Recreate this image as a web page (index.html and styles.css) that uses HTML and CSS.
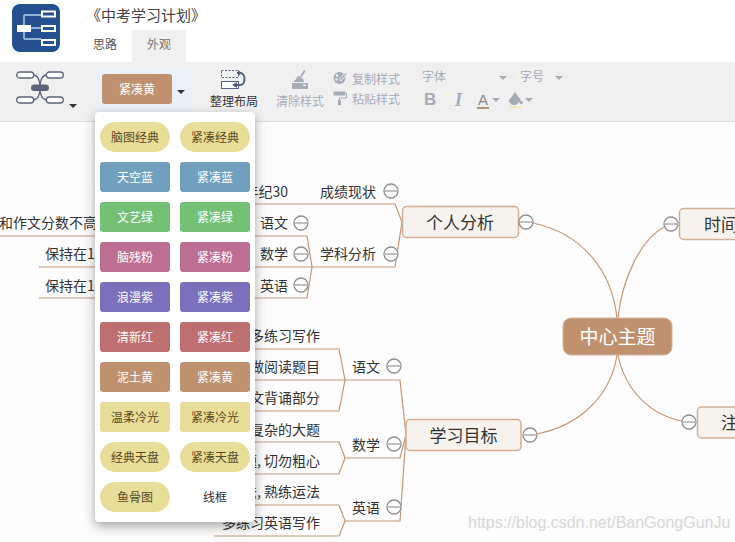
FILE: index.html
```html
<!DOCTYPE html>
<html lang="en">
<head>
  <meta charset="UTF-8">
  <title>中考学习计划</title>
  <link rel="stylesheet" href="styles.css">
</head>
<body>
  <div id="app">
    <div class="header">
      <svg class="logo" viewBox="0 0 48 48">
        <rect width="48" height="48" rx="8" fill="#24508f"/>
        <path d="M12 11V35M12 11H29M12 24H29M12 35H29" stroke="#8fb0d8" stroke-width="2" fill="none"/>
        <rect x="5" y="21" width="14" height="7" fill="#fff"/>
        <rect x="30" y="7.500" width="13" height="5" fill="#24508f" stroke="#fff" stroke-width="2"/>
        <rect x="30" y="22" width="13" height="5" fill="#24508f" stroke="#fff" stroke-width="2"/>
        <rect x="30" y="36" width="13" height="5" fill="#24508f" stroke="#fff" stroke-width="2"/>
      </svg>
      <div class="header-main">
        <div class="title">《中考学习计划》</div>
        <div class="tabs">
          <div class="tab">思路</div>
          <div class="tab tab-active">外观</div>
        </div>
      </div>
    </div>

    <div class="toolbar">
      <div class="struct">
        <svg class="struct-icon" width="48" height="33" viewBox="0 0 48 33">
          <g fill="#fff" stroke="#5c6379" stroke-width="1.300">
            <rect x="0.700" y="1" width="17" height="6" rx="3"/>
            <rect x="30.300" y="1" width="17" height="6" rx="3"/>
            <rect x="0.700" y="26" width="17" height="6" rx="3"/>
            <rect x="30.300" y="26" width="17" height="6" rx="3"/>
            <path d="M18 4C23 5 24 11 24 16.500C24 22 23 28 18 29M30 4C25 5 24 11 24 16.500C24 22 25 28 30 29" fill="none"/>
          </g>
          <rect x="15" y="13.500" width="18" height="6.500" rx="3.200" fill="#5c6379"/>
        </svg>
        <span class="caret caret-dark struct-caret"></span>
      </div>

      <div class="skin">
        <div class="skin-current">紧凑黄</div>
        <span class="caret caret-dark skin-caret"></span>
      </div>

      <div class="layout-tool">
        <svg width="26" height="19" viewBox="0 0 26 19">
          <rect x="0.500" y="0.500" width="17" height="7" fill="none" stroke="#556079" stroke-dasharray="2 1.500"/>
          <rect x="0.500" y="11.500" width="17" height="7" fill="#fff" stroke="#556079"/>
          <path d="M16 3H19C25 3 25 15 19 15H14" fill="none" stroke="#556079" stroke-width="2"/>
          <path d="M17 0L21 3L17 6ZM16 12L11 15L16 18Z" fill="#556079"/>
        </svg>
        <span>整理布局</span>
      </div>

      <div class="clear-tool">
        <svg width="18" height="19" viewBox="0 0 18 19">
          <path d="M13 0L14.500 1L10.500 7.500L9 6.500Z" fill="#a6abb8"/>
          <path d="M7 5.500L12 9C12.500 10 13 11 13 12H2C4 10.500 6 8 7 5.500Z" fill="#a6abb8"/>
          <path d="M1 13H17V19H1Z" fill="#a6abb8"/>
          <rect x="12" y="14.500" width="3" height="1.500" fill="#f0f0f0"/>
        </svg>
        <span>清除样式</span>
      </div>

      <div class="style-tools">
        <div class="style-row">
          <svg width="14" height="14" viewBox="0 0 14 14">
            <circle cx="6.500" cy="7" r="6" fill="#a6abb8"/>
            <circle cx="4" cy="4.500" r="1.200" fill="#f0f0f0"/>
            <circle cx="3.500" cy="8.500" r="1.200" fill="#f0f0f0"/>
            <path d="M13.500 1L6.500 8L8 10L14 3Z" fill="#a6abb8" stroke="#f0f0f0"/>
          </svg>
          <span>复制样式</span>
        </div>
        <div class="style-row">
          <svg width="14" height="14" viewBox="0 0 14 14">
            <rect x="0.500" y="0.500" width="12" height="4" fill="#a6abb8"/>
            <path d="M12.500 2.500H13.500V7H6.500V9" fill="none" stroke="#a6abb8"/>
            <rect x="5" y="9" width="3" height="5" fill="#a6abb8"/>
          </svg>
          <span>粘贴样式</span>
        </div>
      </div>

      <div class="font-tools">
        <div class="font-row">
          <div class="select select-font">字体<span class="caret"></span></div>
          <div class="select select-size">字号<span class="caret"></span></div>
        </div>
        <div class="font-row format-row">
          <span class="fmt-b">B</span>
          <span class="fmt-i">I</span>
          <span class="fmt-a">A</span><span class="caret"></span>
          <svg class="bucket" width="15" height="16" viewBox="0 0 15 16">
            <path d="M7 0L9 3L13 8L8 13H4L0.500 9Z" fill="#a6abb8"/>
            <circle cx="13" cy="10.500" r="1.800" fill="#a6abb8"/>
            <rect x="1" y="14.500" width="12" height="1.500" fill="#eee3a8"/>
          </svg>
          <span class="caret"></span>
        </div>
      </div>
    </div>

    <div class="canvas">
      <svg class="map" width="735" height="420" viewBox="0 122 735 420">
        <g class="links">
          <path d="M617 318C612 272 584 234 533 223"/>
          <path d="M618 318C622 280 640 240 664 227"/>
          <path d="M617 355C610 400 575 427 536 434"/>
          <path d="M618 355C625 390 650 415 682 421"/>

          <path d="M0 236H307L312 267M39 267H395L402 222L395 204H250M39 298H307L312 267"/>
          <path d="M250 349H339L345 380L339 411H250M250 380H400L406 435L400 458H345L339 442H250M345 458L339 474H250M406 435L400 521H345L339 505H250M345 521L339 536H214"/>
        </g>

        <rect class="node" x="402.500" y="206.500" width="116" height="31" rx="4"/>
        <rect class="node" x="406" y="419.500" width="115" height="31" rx="4"/>
        <rect class="node" x="679.500" y="208.500" width="90" height="31" rx="4"/>
        <rect class="node" x="697.500" y="407" width="90" height="31" rx="4"/>
        <rect class="root" x="563" y="318" width="109" height="37" rx="8"/>

        <text class="root-text" x="617.500" y="344">中心主题</text>
        <text class="node-text" x="460" y="229">个人分析</text>
        <text class="node-text" x="463.500" y="442">学习目标</text>
        <text class="node-text node-text-start" x="704" y="231">时间规划</text>
        <text class="node-text node-text-start" x="721" y="429">注意事项</text>

        <g class="label">
          <text x="320" y="197">成绩现状</text>
          <text x="320" y="259">学科分析</text>
          <text x="260" y="228">语文</text>
          <text x="260" y="259">数学</text>
          <text x="260" y="291">英语</text>
          <text x="352" y="372">语文</text>
          <text x="352" y="450">数学</text>
          <text x="352" y="513">英语</text>
          <text x="45" y="259">保持在120分</text>
          <text x="45" y="291">保持在110分</text>
        </g>
        <g class="label label-end">
          <text x="288" y="197">年纪30</text>
          <text x="97" y="228">和作文分数不高</text>
          <text x="320" y="341">多练习写作</text>
          <text x="320" y="372">多做阅读题目</text>
          <text x="320" y="403">课文背诵部分</text>
          <text x="320" y="435">多做复杂的大题</text>
          <text x="320" y="466">认真审题, 切勿粗心</text>
          <text x="320" y="497">记住语法, 熟练运法</text>
          <text x="320" y="528">多练习英语写作</text>
        </g>

        <g class="toggles">
          <circle cx="391" cy="191" r="7"/><path d="M385 191H397"/>
          <circle cx="391" cy="254" r="7"/><path d="M385 254H397"/>
          <circle cx="301" cy="223" r="7"/><path d="M295 223H307"/>
          <circle cx="301" cy="254" r="7"/><path d="M295 254H307"/>
          <circle cx="301" cy="285" r="7"/><path d="M295 285H307"/>
          <circle cx="394" cy="366" r="7"/><path d="M388 366H400"/>
          <circle cx="394" cy="444" r="7"/><path d="M388 444H400"/>
          <circle cx="394" cy="507" r="7"/><path d="M388 507H400"/>
          <circle cx="526" cy="222" r="7"/><path d="M520 222H532"/>
          <circle cx="530" cy="435" r="7"/><path d="M524 435H536"/>
          <circle cx="671" cy="224" r="7"/><path d="M665 224H677"/>
          <circle cx="689" cy="422" r="7"/><path d="M683 422H695"/>
        </g>
      </svg>
      <div class="watermark">https://blog.csdn.net/BanGongGunJu</div>
    </div>

    <div class="skin-menu">
      <div class="skin-btn pill yellow">脑图经典</div>
      <div class="skin-btn pill yellow">紧凑经典</div>
      <div class="skin-btn blue">天空蓝</div>
      <div class="skin-btn blue">紧凑蓝</div>
      <div class="skin-btn green">文艺绿</div>
      <div class="skin-btn green">紧凑绿</div>
      <div class="skin-btn pink">脑残粉</div>
      <div class="skin-btn pink">紧凑粉</div>
      <div class="skin-btn purple">浪漫紫</div>
      <div class="skin-btn purple">紧凑紫</div>
      <div class="skin-btn red">清新红</div>
      <div class="skin-btn red">紧凑红</div>
      <div class="skin-btn brown">泥土黄</div>
      <div class="skin-btn brown">紧凑黄</div>
      <div class="skin-btn yellow">温柔冷光</div>
      <div class="skin-btn yellow">紧凑冷光</div>
      <div class="skin-btn pill yellow">经典天盘</div>
      <div class="skin-btn pill yellow">紧凑天盘</div>
      <div class="skin-btn pill yellow">鱼骨图</div>
      <div class="skin-btn plain">线框</div>
    </div>
  </div>
</body>
</html>
```

FILE: styles.css
```css
html, body {
  margin: 0;
  padding: 0;
  width: 100%;
  height: 100%;
  overflow: hidden;
  background-color: #fff;
  font-family: "Noto Sans CJK SC", "Noto Sans", sans-serif;
  color: #333;
}

#app {
  position: relative;
  width: 735px;
  height: 542px;
  display: flex;
  flex-direction: column;
  overflow: hidden;
}

/* header */
.header {
  height: 62px;
  display: flex;
  flex-shrink: 0;
  padding-left: 12px;
  box-sizing: border-box;
}

.logo {
  width: 48px;
  height: 48px;
  margin-top: 4px;
}

.header-main {
  margin-left: 26px;
}

.title {
  font-size: 15px;
  line-height: 22px;
  height: 30px;
  padding-top: 4px;
  box-sizing: border-box;
  color: #444;
}

.tabs {
  display: flex;
  margin-left: -8px;
}

.tab {
  width: 54px;
  height: 32px;
  line-height: 28px;
  font-size: 12px;
  text-align: center;
  color: #555;
}

.tab-active {
  background-color: #f0f0f0;
  color: #777;
}

/* toolbar */
.toolbar {
  height: 60px;
  flex-shrink: 0;
  display: flex;
  background-color: #f0f0f0;
  border-bottom: 1px solid #ddd;
  box-sizing: border-box;
  font-size: 12px;
}

.caret {
  display: inline-block;
  width: 0;
  height: 0;
  border-left: 4px solid transparent;
  border-right: 4px solid transparent;
  border-top: 4px solid #a6abb8;
}

.caret-dark {
  border-top-color: #333;
}

.struct {
  width: 95px;
  padding: 9px 0 0 16px;
  box-sizing: border-box;
  display: flex;
  align-items: flex-start;
}

.struct-caret {
  margin: 33px 0 0 5px;
}

.skin {
  width: 98px;
  height: 50px;
  margin-top: 6px;
  padding: 6px 0 0 7px;
  box-sizing: border-box;
  background-color: #ebf0f8;
  display: flex;
  align-items: flex-start;
}

.skin-current {
  width: 70px;
  height: 30px;
  line-height: 29px;
  border-radius: 3px;
  text-align: center;
  background-color: #c0916f;
  color: #fff;
}

.skin-caret {
  margin: 16px 0 0 5px;
}

.layout-tool, .clear-tool {
  width: 48px;
  display: flex;
  flex-direction: column;
  align-items: center;
  padding-top: 8px;
  box-sizing: border-box;
  white-space: nowrap;
}

.layout-tool {
  margin-left: 17px;
}

.layout-tool span, .clear-tool span {
  line-height: 18px;
  margin-top: 3px;
}

.clear-tool {
  margin-left: 18px;
  color: #a6abb8;
}

.style-tools {
  margin-left: 9px;
  padding-top: 6px;
  color: #a6abb8;
  width: 83px;
  flex-shrink: 0;
}

.style-row {
  display: flex;
  align-items: center;
  gap: 5px;
  height: 20px;
  white-space: nowrap;
}

.font-tools {
  padding-top: 3px;
}

.font-row {
  display: flex;
}

.select {
  height: 22px;
  line-height: 20px;
  color: #a6abb8;
  padding-left: 5px;
  box-sizing: border-box;
  display: flex;
  justify-content: space-between;
  background-color: #f0f0f0;
  border: 1px solid #ededed;
}

.select .caret {
  margin: 10px 6px 0 0;
}

.select-font {
  width: 98px;
}

.select-size {
  width: 56px;
}

.format-row {
  align-items: center;
  height: 26px;
  color: #a6abb8;
  padding-left: 8px;
}

.fmt-b {
  font-family: "Liberation Sans", sans-serif;
  font-size: 17px;
  font-weight: bold;
  width: 31px;
}

.fmt-i {
  font-family: "Liberation Serif", serif;
  font-size: 18px;
  font-style: italic;
  font-weight: bold;
  width: 22px;
}

.fmt-a {
  font-family: "Liberation Sans", sans-serif;
  font-size: 15px;
  line-height: 15px;
  width: 12px;
  text-align: center;
  color: #888;
  border-bottom: 2px solid #a89878;
}

.fmt-a + .caret {
  margin-left: 3px;
}

.bucket {
  margin: 0 2px 0 8px;
}

/* mind map */
.canvas {
  position: relative;
  flex: 1;
  background-color: #fcfcfc;
  overflow: hidden;
}

.map {
  display: block;
}

.links path {
  fill: none;
  stroke: #c4977a;
  stroke-width: 1.200;
}

.node {
  fill: #f6f3ef;
  stroke: #d2ae94;
  stroke-width: 1.500;
}

.root {
  fill: #c0916f;
  stroke: #d6b59d;
}

.root-text {
  font-size: 19px;
  fill: #fff;
  text-anchor: middle;
}

.node-text {
  font-size: 17px;
  fill: #333;
  text-anchor: middle;
}

.node-text-start {
  text-anchor: start;
}

.label text {
  font-size: 14px;
  fill: #333;
}

.label-end text {
  text-anchor: end;
}

.toggles circle {
  fill: #fff;
  stroke: #8f8f8f;
  stroke-width: 1.300;
}

.toggles path {
  stroke: #aaa;
  stroke-width: 1.500;
}

.watermark {
  position: absolute;
  left: 468px;
  bottom: 9px;
  font-family: "Liberation Sans", sans-serif;
  font-size: 16px;
  line-height: 20px;
  color: #d8d8d8;
  white-space: nowrap;
}

/* skin dropdown */
.skin-menu {
  position: absolute;
  left: 95px;
  top: 112px;
  width: 160px;
  height: 410px;
  box-sizing: border-box;
  padding: 10px 5px;
  display: grid;
  grid-template-columns: 70px 70px;
  grid-auto-rows: 30px;
  gap: 10px;
  background-color: #fff;
  border-radius: 4px;
  box-shadow: 0 4px 12px rgba(0, 0, 0, 0.35);
}

.skin-btn {
  font-size: 12px;
  line-height: 29px;
  text-align: center;
  border-radius: 3px;
  color: #fff;
}

.pill {
  border-radius: 15px;
}

.yellow {
  background-color: #e9de99;
  color: #5a4a1e;
}

.blue {
  background-color: #71a0be;
}

.green {
  background-color: #73c076;
}

.pink {
  background-color: #bc6f92;
}

.purple {
  background-color: #7b70bb;
}

.red {
  background-color: #bf6f6f;
}

.brown {
  background-color: #c0916f;
}

.plain {
  color: #333;
}
```
